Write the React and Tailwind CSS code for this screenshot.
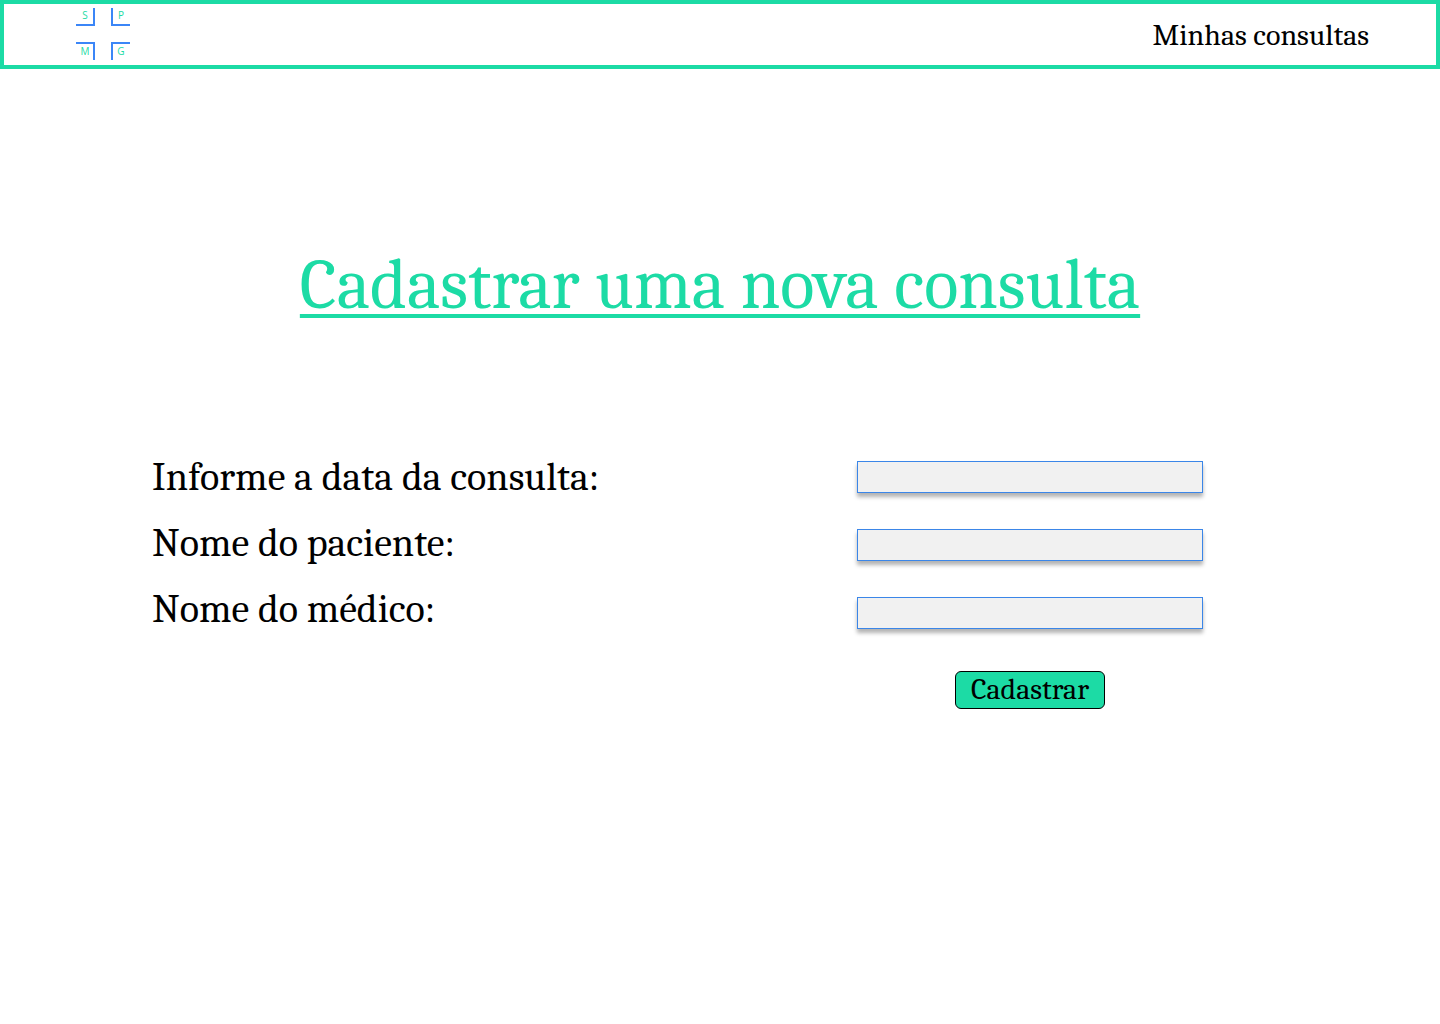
const fields = [
  { id: 'data', label: 'Informe a data da consulta:' },
  { id: 'paciente', label: 'Nome do paciente:' },
  { id: 'medico', label: 'Nome do médico:' },
];

function Logo() {
  return (
    <svg width="54" height="52" viewBox="0 0 54 52" role="img" aria-label="SPMG">
      <path d="M0 17H18V0M36 0V17H54M0 35H18V52M36 52V35H54" fill="none" stroke="#3b86f7" strokeWidth="2" />
      <g fill="#1cdba5" fontSize="10" fontFamily="Open Sans, sans-serif" textAnchor="middle">
        <text x="9" y="11">S</text>
        <text x="45" y="11">P</text>
        <text x="9" y="47">M</text>
        <text x="45" y="47">G</text>
      </g>
    </svg>
  );
}

export default function App() {
  return (
    <div className="min-h-screen bg-white font-['Cambria','Caladea','Liberation_Serif',serif] text-black">
      <header className="flex items-start justify-between border-4 border-[#1cdba5] pt-1 pb-px pl-[72px] pr-[67px]">
        <a href="#inicio"><Logo /></a>
        <nav>
          <a href="#consultas" className="block text-[30px] leading-[56px]">Minhas consultas</a>
        </nav>
      </header>
      <main className="pt-[172px] pr-[237px] pl-[152px]">
        <h1 className="-mr-[85px] text-center text-[71px] leading-[88px] text-[#1cdba5] underline decoration-4 underline-offset-[6px]">
          Cadastrar uma nova consulta
        </h1>
        <form className="mt-32 flex items-start justify-between">
          <div className="flex flex-col gap-[26px]">
            {fields.map((f) => (
              <label key={f.id} htmlFor={f.id} className="text-[40px] leading-10">{f.label}</label>
            ))}
          </div>
          <div className="flex w-[346px] flex-col items-center gap-9 pt-1">
            {fields.map((f) => (
              <input
                key={f.id}
                id={f.id}
                type="text"
                className="h-8 w-full border border-[#3b86e8] bg-[#f1f1f1] px-2 text-xl shadow-[0_4px_4px_rgba(0,0,0,0.3)]"
              />
            ))}
            <button type="button" className="mt-1.5 h-[38px] w-[150px] rounded-md border border-black bg-[#1cdba5] text-[30px] leading-9">
              Cadastrar
            </button>
          </div>
        </form>
      </main>
    </div>
  );
}
